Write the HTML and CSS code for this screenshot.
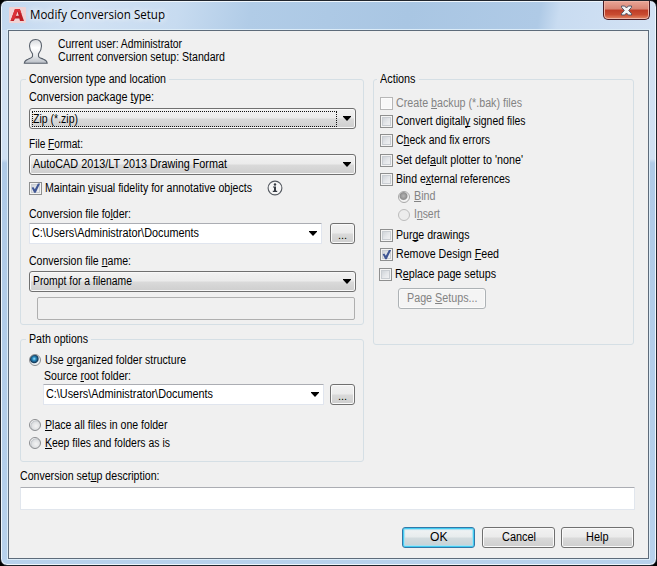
FILE: index.html
```html
<!DOCTYPE html>
<html lang="en">
<head>
<meta charset="utf-8">
<title>Modify Conversion Setup</title>
<link rel="stylesheet" href="styles.css">
</head>
<body>
<div class="window">
  <header class="titlebar">
    <svg class="logo" width="17" height="16" viewBox="0 0 17 16"><rect width="17" height="16" rx="1" fill="#f0d3d5"/><path d="M1.500 14 6 2h4.800L15 14h-4l-.7-2.600H6L4.800 14z" fill="#bd2027"/><path d="M6.800 8.800h3L8.400 4.500z" fill="#f3dada"/><path d="M6 2h4.800l1.800 5-2.400-1.800L8.600 3.500 6 11.400 1.500 14z" fill="#dc3238"/></svg>
    <span class="title" data-w="134">Modify Conversion Setup</span>
    <button class="close" aria-label="Close"><svg width="13" height="11" viewBox="0 0 13 11"><path d="M1.500 1h3.200l1.800 2 1.800-2h3.200v1.300L8.700 5.500l2.800 3.200V10H8.300l-1.800-2-1.800 2H1.500V8.700l2.800-3.200-2.800-3.200z" fill="#f5f5f5" stroke="#535666"/></svg></button>
  </header>
  <main class="client">
    <div class="summary">
      <svg class="user" width="26" height="27" viewBox="0 0 26 27"><defs><linearGradient id="u" x2="0" y2="1"><stop offset="0" stop-color="#d5d8dc"/><stop offset=".35" stop-color="#fff"/><stop offset=".7" stop-color="#e4e7ea"/><stop offset="1" stop-color="#b9bec6"/></linearGradient></defs><path d="M12.500 1.500c4 0 6 2.600 6 6.500 0 3.500-1.500 6-3 7.800v2.400c0 1.500 2.500 2 5 3 2.500.9 3.500 2 3.700 4H1.300c.2-2 1.200-3.100 3.700-4 2.500-1 4.500-1.500 4.500-3v-2.400c-1.500-1.800-3-4.300-3-7.800 0-3.900 2-6.500 6-6.500z" fill="url(#u)" stroke="#59616c" stroke-width="1.100"/></svg>
      <div class="who"><p><span data-w="123">Current user: Administrator</span></p><p><span data-w="166">Current conversion setup: Standard</span></p></div>
    </div>
    <div class="columns">
      <div class="left">
        <fieldset class="group location">
          <legend><span data-w="136">Conversion type and location</span></legend>
          <label class="caption first"><span data-w="124">Conversion package <u>t</u>ype:</span></label>
          <div class="select focused"><span class="value"><span data-w="44">Zip (*.zip)</span></span><i class="arrow"></i></div>
          <label class="caption format"><span data-w="53">File <u>F</u>ormat:</span></label>
          <div class="select"><span data-w="193">AutoCAD 2013/LT 2013 Drawing Format</span><i class="arrow"></i></div>
          <div class="fidelity"><i class="check on"></i><span data-w="206">Maintain <u>v</u>isual fidelity for annotative objects</span>
            <svg class="info" width="16" height="16" viewBox="0 0 16 16"><circle cx="8" cy="8" r="6.900" fill="#f6f6f6" stroke="#555a61" stroke-width="1.100"/><circle cx="8" cy="4.500" r="1.200" fill="#353a42"/><path d="M6 6.500h3v4.300h1.200V12H5.800v-1.200H7V7.600H6z" fill="#353a42"/></svg></div>
          <label class="caption folder"><span data-w="101">Conversion file fo<u>l</u>der:</span></label>
          <div class="pathrow"><div class="combo"><span data-w="166">C:\Users\Administrator\Documents</span><i class="arrow"></i></div><button class="btn browse">...</button></div>
          <label class="caption name"><span data-w="101">Conversion file <u>n</u>ame:</span></label>
          <div class="select"><span data-w="98">Prompt for a filename</span><i class="arrow"></i></div>
          <div class="field disabled"></div>
        </fieldset>
        <fieldset class="group paths">
          <legend><span data-w="58">Path options</span></legend>
          <div class="option organized"><i class="radio on"></i><span data-w="140">Use <u>o</u>rganized folder structure</span></div>
          <div class="nested">
            <label class="caption"><span data-w="86">Source <u>r</u>oot folder:</span></label>
            <div class="pathrow"><div class="combo"><span data-w="166">C:\Users\Administrator\Documents</span><i class="arrow"></i></div><button class="btn browse">...</button></div>
          </div>
          <div class="option place"><i class="radio"></i><span data-w="121.500"><u>P</u>lace all files in one folder</span></div>
          <div class="option"><i class="radio"></i><span data-w="124"><u>K</u>eep files and folders as is</span></div>
        </fieldset>
      </div>
      <fieldset class="group actions">
        <legend><span data-w="34.500">Actions</span></legend>
        <div class="item r18 dim"><i class="check"></i><span data-w="125">Create <u>b</u>ackup (*.bak) files</span></div>
        <div class="item r19"><i class="check"></i><span data-w="128.500">Convert digitall<u>y</u> signed files</span></div>
        <div class="item r20"><i class="check"></i><span data-w="93">C<u>h</u>eck and fix errors</span></div>
        <div class="item r19"><i class="check"></i><span data-w="126">Set def<u>a</u>ult plotter to 'none'</span></div>
        <div class="item r17"><i class="check"></i><span data-w="113">Bind e<u>x</u>ternal references</span></div>
        <div class="item r18 sub dim"><i class="radio on"></i><span data-w="20.500"><u>B</u>ind</span></div>
        <div class="item r21 sub dim"><i class="radio"></i><span data-w="25">I<u>n</u>sert</span></div>
        <div class="item r19"><i class="check"></i><span data-w="72.500">Pur<u>g</u>e drawings</span></div>
        <div class="item r20"><i class="check on"></i><span data-w="102">Remove Design <u>F</u>eed</span></div>
        <div class="item r21 replace"><i class="check"></i><span data-w="100">R<u>e</u>place page setups</span></div>
        <button class="btn setups" disabled><span data-w="69.500">Page <u>S</u>etups...</span></button>
      </fieldset>
    </div>
    <label class="caption desc"><span data-w="138.500">Conversion set<u>u</u>p description:</span></label>
    <div class="field description"></div>
    <footer class="buttons">
      <button class="btn default"><span data-w="16.500">OK</span></button>
      <button class="btn"><span data-w="33">Cancel</span></button>
      <button class="btn help"><span data-w="21.500">Help</span></button>
    </footer>
  </main>
</div>
<script src="script.js"></script>
</body>
</html>
```
FILE: script.js
```js
// Condenses each label horizontally to the width given in its data-w attribute.
document.querySelectorAll('[data-w]').forEach(function (el) {
  var natural = el.getBoundingClientRect().width;
  var width = Number(el.dataset.w) + 1;
  el.style.width = width + 'px';
  el.style.transform = 'scaleX(' + (width / natural).toFixed(4) + ')';
});
```
FILE: styles.css
```css
* { box-sizing: border-box; }
body { margin: 0; background: #000; font: 12px/15px "Liberation Sans", Arial, sans-serif; color: #000; overflow: hidden; }
p { margin: 0; }
u { text-decoration: underline; text-decoration-thickness: 1px; text-underline-offset: 1px; text-decoration-skip-ink: none; }
[data-w] { display: inline-block; white-space: pre; flex: none; text-align: left; transform-origin: 0 50%; }

.window {
  width: 657px; height: 566px; padding: 0 7px 7px; border: 1px solid #20252d; border-radius: 7px;
  background: linear-gradient(180deg, #d3e2f3 0, #d0e0f2 158px, #afcae7 162px, #b4cfeb 480px, #b8d2ed 100%);
  box-shadow: inset 0 0 0 1px #eff6fc;
}
.titlebar {
  height: 28px; margin: 1px -6px 0; padding: 0 0 0 7px; display: flex; align-items: flex-start; border-radius: 5px 5px 0 0;
  background: linear-gradient(100deg, #c3d8ef 0, #d2e2f4 12%, #c7dbf0 27%, #b1cce7 38%, #a9c6e3 62%, #afcae6 82%, #c9dcf1 85%, #d3e2f4 100%);
}
.logo { margin-top: 5px; }
.title { font: 12px/16px "Open Sans", "Noto Sans", sans-serif; margin: 5px 0 0 4px; text-shadow: 0 0 6px #fff, 0 0 8px #ffffffb0; }
.close {
  margin: -1px 5px 0 auto; width: 47px; height: 19px; padding: 0; display: flex; align-items: center; justify-content: center;
  border: 1px solid #4b1d25; border-top: 0; border-radius: 0 0 5px 5px; box-shadow: inset 0 0 0 1px #eeb3a5;
  background: linear-gradient(#e9a697 0, #d98473 45%, #bd3c27 50%, #c94b31 75%, #e48a68 100%);
}
.client { height: 529px; background: #f0f0f0; border: 1px solid #5d6b7a; padding: 6px 13px 0 11px; box-shadow: 0 0 0 1px #dcecf8; }

.summary { display: flex; height: 35px; padding-left: 3px; }
.user { margin-top: 1px; flex: none; }
.who { margin: 1px 0 0 9px; line-height: 13px; }
.who p { height: 13px; }

.columns { display: flex; gap: 9px; }
.left { width: 344px; }
.group { margin: 0; padding: 0 7px 0 8px; min-width: 0; border: 1px solid #d5dfe5; border-radius: 3px; }
.group legend { height: 15px; margin: 0 0 0 -3px; padding: 0 3px; }
.location { height: 253px; }
.paths { height: 130px; margin-top: 7px; }
.actions { width: 261px; height: 273px; padding: 10px 6px 0; }

.caption { display: block; height: 15px; }
.caption.first { margin: 3px 0 3px; }
.caption.format { margin: 8px 0 2px; }
.caption.folder { margin: 9px 0 1px; }
.caption.name { margin: 10px 0 2px; }

.select {
  height: 21px; width: 327px; border: 1px solid #707070; border-radius: 3px; padding: 0 4px 0 3px; display: flex; align-items: center; justify-content: space-between;
  background: linear-gradient(#f2f2f2 0, #ebebeb 48%, #dadada 52%, #cecece 100%); box-shadow: inset 0 0 0 1px #f8f8f8;
}
.focused { padding-left: 2px; }
.value { width: 305px; height: 16px; border: 1px dotted #111; padding-left: 0; line-height: 14px; }
.arrow { width: 8px; height: 5px; background: #000; clip-path: polygon(0 0, 100% 0, 100% 15%, 50% 100%, 0 15%); flex: none; }

.fidelity { display: flex; align-items: center; height: 20px; margin-top: 3px; }
.fidelity .check { margin-right: 3px; }
.info { margin-left: 15px; }

.check {
  flex: none; width: 13px; height: 13px; border: 1px solid #8e8f8f; position: relative;
  background: linear-gradient(135deg, #c5cad0 0, #e6e8eb 55%, #f6f6f6 100%); box-shadow: inset 0 0 0 1px #f4f4f4, inset 0 0 0 2px #c9cdd2;
}
.check.on::after {
  content: ""; position: absolute; inset: 0; background: #3f5694;
  clip-path: polygon(15% 48%, 30% 42%, 44% 62%, 72% 8%, 92% 8%, 52% 93%, 38% 93%);
}
.dim .check { border-color: #b7b7b7; background: #f8f8f8; box-shadow: inset 0 0 0 1px #fcfcfc; }

.pathrow { display: flex; justify-content: space-between; width: 326px; }
.combo {
  width: 293px; height: 21px; background: #fff; border: 1px solid #e0e5ee; border-top-color: #abadb3; border-radius: 1px;
  padding: 0 4px 0 2px; display: flex; align-items: center; justify-content: space-between;
}

.btn {
  width: 73px; height: 21px; padding: 0; text-align: center; font: inherit; color: #000; border: 1px solid #707070; border-radius: 3px;
  background: linear-gradient(#f2f2f2 0, #ebebeb 48%, #dadada 52%, #cecece 100%); box-shadow: inset 0 0 0 1px #fafafa;
}
.browse { width: 25px; padding-top: 3px; font-size: 11px; }
.default { border-color: #3278a8; box-shadow: inset 0 0 0 1px #43cdf3, inset 0 0 1px 2px #a9dff0; background: linear-gradient(#f1f4f5 0, #e7eced 48%, #d3dcdf 52%, #c5d1d5 100%); }

.field { background: #fff; border: 1px solid #e1e6ed; border-top-color: #abadb3; border-radius: 1px; height: 23px; }
.field.disabled { width: 318px; margin: 5px 0 0 8px; background: #f0f0f0; border: 1px solid #afafaf; border-radius: 2px; }

.radio {
  flex: none; width: 12px; height: 12px; border-radius: 50%; border: 1px solid #8b8d90; position: relative;
  background: radial-gradient(circle at 60% 60%, #f3f3f3 0, #dfe1e3 45%, #c2c6ca 62%, #fafafa 70%);
}
.radio.on { background: radial-gradient(circle at 42% 38%, #a9e3f8 0, #2b8fc4 20%, #12395a 46%, #eaf0f3 58%, #f7f7f7 100%); }
.dim .radio { border-color: #bcbcbc; background: #ececec; }
.dim .radio.on { border-color: #a8a8a8; background: radial-gradient(circle at 45% 40%, #b5b5b5 0, #8f8f8f 42%, #f3f3f3 56%); }

.option { display: flex; align-items: center; gap: 4px; height: 18px; }
.organized { margin-top: 4px; }
.nested { padding-left: 14px; }
.nested .caption { padding-left: 1px; }
.nested .pathrow { width: 312px; }
.nested .combo { width: 281px; }
.place { margin-top: 11px; }

.item { display: flex; align-items: center; gap: 3px; height: 13px; }
.dim { color: #838383; }
.sub { padding-left: 18px; gap: 4px; }
.replace { margin-left: -1px; }
.r17 { margin-bottom: 4px; }
.r18 { margin-bottom: 5px; }
.r19 { margin-bottom: 6px; }
.r20 { margin-bottom: 7px; }
.r21 { margin-bottom: 8px; }
.setups { width: 88px; display: block; margin: -1px 0 0 18px; color: #838383; border-color: #adb2b5; background: #f4f4f4; }

.desc { margin-top: 7px; }
.description { width: 615px; margin-top: 3px; }
.buttons { display: flex; justify-content: flex-end; gap: 7px; margin-top: 17px; padding-right: 1px; }
.help { margin-left: -1px; }
```
